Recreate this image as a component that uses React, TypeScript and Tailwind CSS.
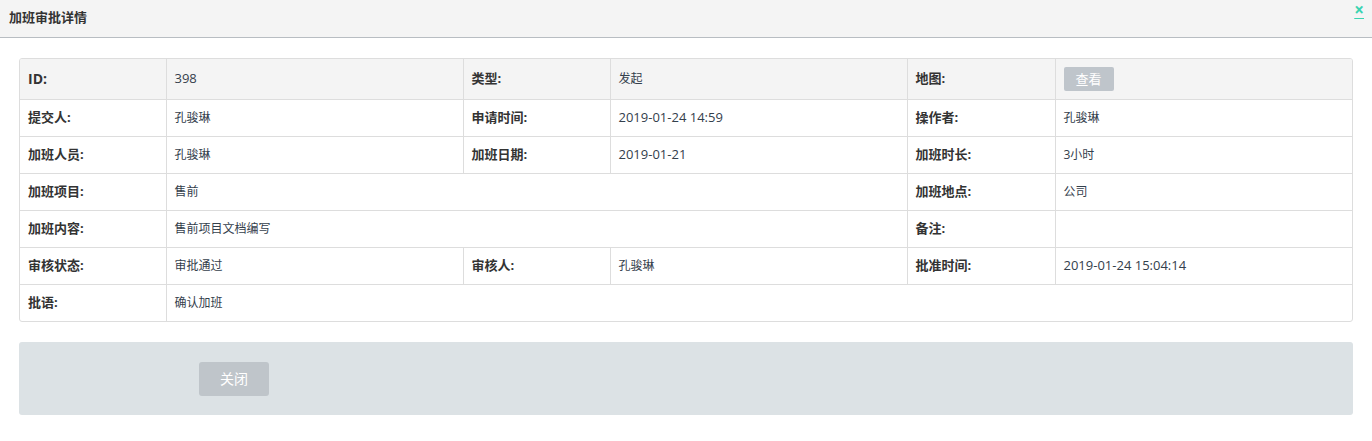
import type { ReactNode } from 'react';

const FONT = '"Open Sans", "Noto Sans CJK SC", sans-serif';

function Label({ children }: { children: ReactNode }) {
  return (
    <td className="border border-[#ddd] pl-[8px] text-[13px] font-bold text-[#333] align-middle">
      {children}
    </td>
  );
}

function Value({ children, span = 1, num = false }: { children?: ReactNode; span?: number; num?: boolean }) {
  return (
    <td
      colSpan={span}
      className={`border border-[#ddd] pl-[8px] align-middle text-[#34404c] ${num ? 'text-[13px]' : 'text-[12px]'}`}
    >
      {children}
    </td>
  );
}

export default function App() {
  return (
    <div className="w-[1372px] h-[441px] bg-white" style={{ fontFamily: FONT }}>
      {/* Title bar */}
      <div className="h-[38px] bg-[#f4f4f4] border-b border-[#b8bdc2] flex items-center justify-between pl-[9px] pr-[8px]">
        <h1 className="text-[13px] font-bold text-[#333] -mt-[1px]">加班审批详情</h1>
        <a className="self-start mt-[2px] text-[17px] font-bold leading-[15px] text-[#3ad3b1] underline underline-offset-[2px] decoration-[#3ad3b1] cursor-pointer">
          ×
        </a>
      </div>

      <div className="px-[19px] pt-[20px]">
        <div className="border border-[#ddd] rounded-[3px] overflow-hidden">
          <table className="w-full border-collapse border-hidden table-fixed">
            <colgroup>
              <col className="w-[146px]" />
              <col className="w-[297px]" />
              <col className="w-[147px]" />
              <col className="w-[297px]" />
              <col className="w-[148px]" />
              <col />
            </colgroup>
            <tbody>
              <tr className="h-[40px] bg-[#f4f4f4]">
                <td className="border border-[#ddd] pl-[8px] text-[14px] font-bold text-[#333] align-middle">ID:</td>
                <Value num>398</Value>
                <Label>类型:</Label>
                <Value>发起</Value>
                <Label>地图:</Label>
                <Value>
                  <button className="w-[50px] h-[24px] bg-[#bfc5cb] text-white text-[13px] rounded-[2px] mt-[1px]">
                    查看
                  </button>
                </Value>
              </tr>
              <tr className="h-[37px]">
                <Label>提交人:</Label>
                <Value>孔骏琳</Value>
                <Label>申请时间:</Label>
                <Value num>2019-01-24 14:59</Value>
                <Label>操作者:</Label>
                <Value>孔骏琳</Value>
              </tr>
              <tr className="h-[37px]">
                <Label>加班人员:</Label>
                <Value>孔骏琳</Value>
                <Label>加班日期:</Label>
                <Value num>2019-01-21</Value>
                <Label>加班时长:</Label>
                <Value>3小时</Value>
              </tr>
              <tr className="h-[37px]">
                <Label>加班项目:</Label>
                <Value span={3}>售前</Value>
                <Label>加班地点:</Label>
                <Value>公司</Value>
              </tr>
              <tr className="h-[37px]">
                <Label>加班内容:</Label>
                <Value span={3}>售前项目文档编写</Value>
                <Label>备注:</Label>
                <Value />
              </tr>
              <tr className="h-[37px]">
                <Label>审核状态:</Label>
                <Value>审批通过</Value>
                <Label>审核人:</Label>
                <Value>孔骏琳</Value>
                <Label>批准时间:</Label>
                <Value num>2019-01-24 15:04:14</Value>
              </tr>
              <tr className="h-[37px]">
                <Label>批语:</Label>
                <Value span={5}>确认加班</Value>
              </tr>
            </tbody>
          </table>
        </div>

        {/* Footer actions */}
        <div className="mt-[20px] h-[73px] bg-[#dce2e5] rounded-[3px] flex items-center pl-[180px]">
          <button className="w-[70px] h-[34px] bg-[#bfc5ca] text-white text-[14px] rounded-[3px]">关闭</button>
        </div>
      </div>
    </div>
  );
}
